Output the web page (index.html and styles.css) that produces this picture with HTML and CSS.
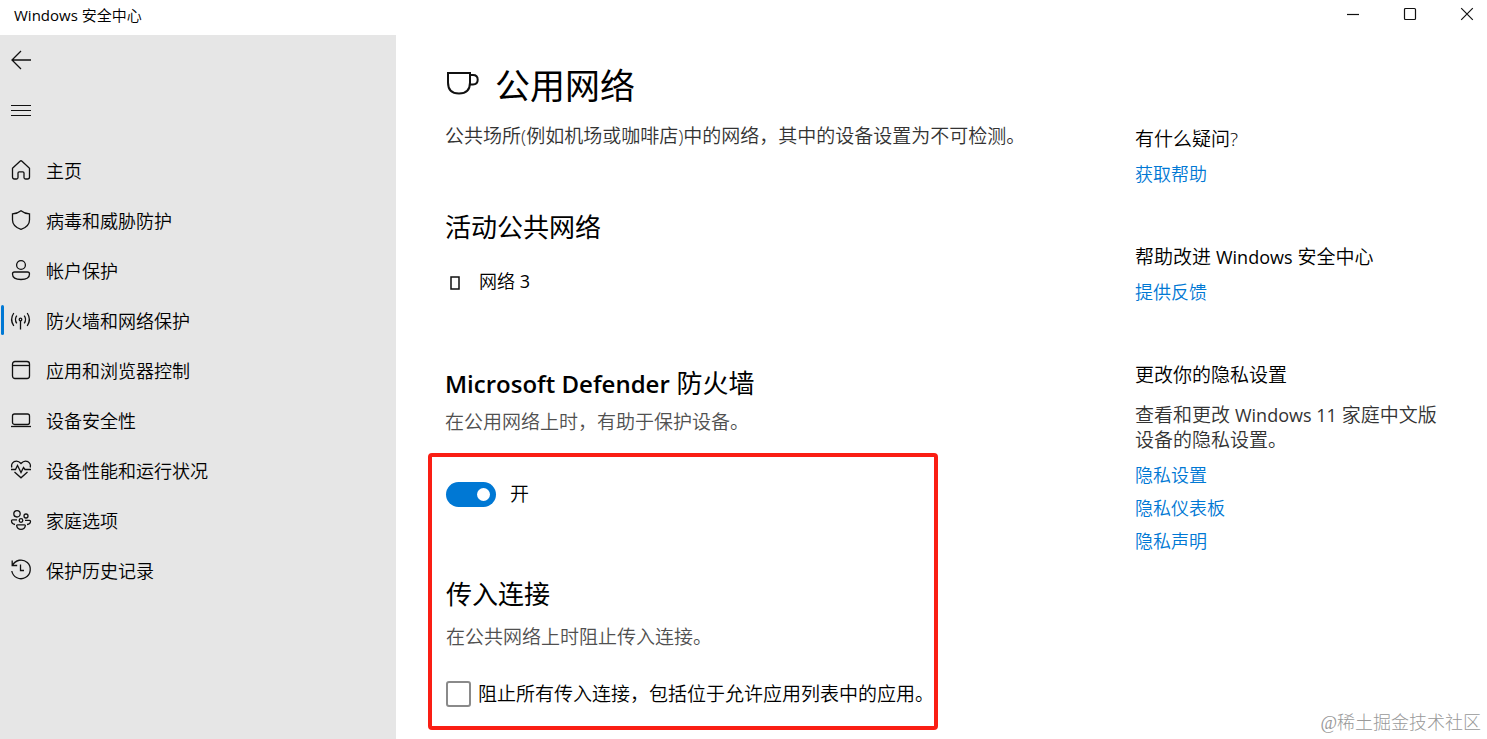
FILE: index.html
```html
<!DOCTYPE html>
<html lang="zh-CN">
<head>
<meta charset="utf-8">
<title>Windows 安全中心</title>
<link rel="stylesheet" href="styles.css">
</head>
<body>
<div class="window">
  <header class="titlebar">
    <span class="titlebar-name"><span class="latin">Windows</span> 安全中心</span>
    <div class="controls">
      <button class="control" aria-label="最小化"><svg class="control-icon" viewBox="0 0 14 14"><path d="M1 7.500h12"/></svg></button>
      <button class="control" aria-label="最大化"><svg class="control-icon" viewBox="0 0 14 14"><rect x="1.500" y="1.500" width="11" height="11" rx="1"/></svg></button>
      <button class="control" aria-label="关闭"><svg class="control-icon" viewBox="0 0 14 14"><path d="M1.200 1.200l11.600 11.600M12.800 1.200L1.200 12.800"/></svg></button>
    </div>
  </header>

  <nav class="sidebar">
    <button class="nav-row" aria-label="返回"><svg class="icon" viewBox="0 0 20 20"><path d="M20 11H1M10 2L1 11l9 9"/></svg></button>
    <button class="nav-row" aria-label="菜单"><svg class="icon" viewBox="0 0 20 20"><path stroke-width="1" d="M0 6.500h20M0 11.500h20M0 16.500h20"/></svg></button>
    <div class="nav-list">
      <a class="nav-row" href="#"><svg class="icon" viewBox="0 0 20 20"><path d="M1.500 8.300L9 1.200q1-.9 2 0l7.500 7.100v8.700q0 2-2 2h-2q-1.500 0-1.500-1.500v-4.500q0-1.200-1.200-1.200H8.200Q7 11.800 7 13v4.500Q7 19 5.500 19h-2q-2 0-2-2z"/></svg>主页</a>
      <a class="nav-row" href="#"><svg class="icon" viewBox="0 0 20 20"><path d="M10 .8Q13.500 3.700 18.500 3.900V10q0 6.500-8.500 9.300Q1.500 16.500 1.500 10V3.900Q6.500 3.700 10 .8z"/></svg>病毒和威胁防护</a>
      <a class="nav-row" href="#"><svg class="icon" viewBox="0 0 20 20"><circle cx="10" cy="5" r="4.400"/><path d="M3.500 12h13q2 0 2 2 0 5.500-8.500 5.500T1.500 14q0-2 2-2z"/></svg>帐户保护</a>
      <a class="nav-row active" href="#" aria-current="page"><svg class="icon" viewBox="0 0 20 20"><circle cx="9.500" cy="9.500" r="1.300"/><path d="M9.500 11v8.500M5.800 13.300q-2.800-3.800 0-7.600M13.200 13.300q2.800-3.800 0-7.600M2.800 16q-4.400-6.500 0-13M16.200 16q4.400-6.500 0-13"/></svg>防火墙和网络保护</a>
      <a class="nav-row" href="#"><svg class="icon" viewBox="0 0 20 20"><rect x="1.500" y="1.500" width="17" height="17" rx="2.500"/><path d="M1.500 5.500h17"/></svg>应用和浏览器控制</a>
      <a class="nav-row" href="#"><svg class="icon" viewBox="0 0 20 20"><rect x="1.500" y="4" width="17" height="10.500" rx="2"/><path d="M0 16.500h20"/></svg>设备安全性</a>
      <a class="nav-row" href="#"><svg class="icon" viewBox="0 0 20 20"><path d="M.8 7.500Q-.2 3.500 3 1.700q3.800-1.800 7 1.800 3.200-3.600 7-1.800 3.200 1.800 2.200 5.800M0 9.500h4.500l2-4 3.500 7 2.500-5 1.500 2h6M3.500 12L10 17.800 16.500 12"/></svg>设备性能和运行状况</a>
      <a class="nav-row" href="#"><svg class="icon" viewBox="0 0 20 20"><circle cx="6" cy="3.800" r="3.200"/><circle cx="15" cy="6" r="2"/><circle cx="10" cy="10.500" r="1.800"/><path d="M6 9.800H1.500q-1 0-1 1 0 3.200 3.500 3.700M14 10.300h4.500q1 0 1 1 0 3-3.500 3.200M6.500 14.800h7q1 0 .8 1-.7 3.500-4.300 3.500t-4.300-3.500q-.2-1 .8-1z"/></svg>家庭选项</a>
      <a class="nav-row" href="#"><svg class="icon" viewBox="0 0 20 20"><path d="M1.200 .5v5h5M1.500 5.500A9.300 9.300 0 1 1 .8 11M9.500 4.500v6H13"/></svg>保护历史记录</a>
    </div>
  </nav>

  <main class="content">
    <h1 class="page-title"><svg class="cup" viewBox="0 0 34 24"><path d="M3 2h22v9.500q0 11-11 11t-11-11zM25 4h3q4.700 0 4.700 4.700T28 13.400h-3"/></svg>公用网络</h1>
    <p class="lead">公共场所(例如机场或咖啡店)中的网络，其中的设备设置为不可检测。</p>

    <h2 class="heading networks-heading">活动公共网络</h2>
    <div class="network"><svg class="network-icon" viewBox="0 0 10 14"><rect x="1" y="1" width="8" height="12"/></svg><span>网络 <span class="latin">3</span></span></div>

    <h2 class="heading firewall-heading"><span class="product">Microsoft Defender</span> 防火墙</h2>
    <p class="note firewall-note">在公用网络上时，有助于保护设备。</p>

    <section class="highlight">
      <label class="switch-row"><input class="switch" type="checkbox" role="switch" checked>开</label>
      <h2 class="heading incoming-heading">传入连接</h2>
      <p class="note incoming-note">在公共网络上时阻止传入连接。</p>
      <label class="check-row"><input class="check" type="checkbox">阻止所有传入连接，包括位于允许应用列表中的应用。</label>
    </section>
  </main>

  <aside class="help">
    <section class="help-group">
      <h3 class="help-title">有什么疑问?</h3>
      <a class="link" href="#">获取帮助</a>
    </section>
    <section class="help-group">
      <h3 class="help-title">帮助改进 <span class="latin">Windows</span> 安全中心</h3>
      <a class="link" href="#">提供反馈</a>
    </section>
    <section class="help-group">
      <h3 class="help-title">更改你的隐私设置</h3>
      <p class="help-text">查看和更改 <span class="latin">Windows 11</span> 家庭中文版设备的隐私设置。</p>
      <div class="links">
        <a class="link" href="#">隐私设置</a>
        <a class="link" href="#">隐私仪表板</a>
        <a class="link" href="#">隐私声明</a>
      </div>
    </section>
  </aside>
  <span class="watermark">@稀土掘金技术社区</span>
</div>
</body>
</html>
```
FILE: styles.css
```css
* { box-sizing: border-box; }

body {
  margin: 0;
  background: #fff;
  color: #000;
  font-family: "Open Sans", "Noto Sans CJK SC", sans-serif;
  font-size: 18px;
  font-weight: 350;
  line-height: 26px;
}

h1, h2, h3, p { margin: 0; font-weight: inherit; }
a { text-decoration: none; color: inherit; }
button { font: inherit; color: inherit; background: none; border: 0; }
svg { fill: none; stroke: #111; flex: none; }
.latin { font-size: 18px; font-weight: 400; line-height: 1; }

.window {
  position: relative;
  min-height: 100vh;
  display: grid;
  grid-template-columns: 396px 1fr 352px;
  grid-template-rows: 35px 1fr;
}

.titlebar {
  grid-column: 1 / -1;
  display: flex;
  justify-content: space-between;
  padding-left: 14px;
  font-size: 15px;
  line-height: 30px;
}
.titlebar .latin { font-size: 15px; }
.controls { display: flex; height: 28px; margin-right: -8px; }
.control { width: 57px; padding: 0; display: grid; place-items: center; }
.control-icon { width: 14px; height: 14px; stroke-width: 1.2; }

.sidebar { background: #e6e6e6; }
.nav-list { margin-top: 11px; }
.nav-row {
  position: relative;
  display: flex;
  align-items: center;
  gap: 15px;
  width: 100%;
  height: 50px;
  padding: 0 11px;
}
.icon { width: 20px; height: 20px; margin-bottom: 2px; stroke-width: 1.3; overflow: visible; }
.active::before {
  content: "";
  position: absolute;
  left: 1px;
  top: 9px;
  width: 3px;
  height: 30px;
  border-radius: 2px;
  background: #0078d4;
}

.content { padding: 27px 0 9px 49px; }
.page-title { display: flex; gap: 16px; align-items: center; font-size: 35px; line-height: 48px; font-weight: 400; }
.cup { width: 34px; height: 24px; margin-bottom: 6px; stroke-width: 2; }
.lead { margin-top: 13px; font-size: 19px; color: #333; }
.heading { font-size: 26px; line-height: 34px; font-weight: 400; }
.networks-heading { margin-top: 61px; }
.network { display: flex; align-items: center; gap: 19px; margin-top: 24px; padding-left: 5px; }
.network-icon { width: 10px; height: 14px; margin-top: 4px; stroke-width: 1.5; }
.firewall-heading { margin-top: 72px; }
.product { font-size: 24px; font-weight: 600; line-height: 1; }
.note { font-size: 19px; color: #505050; }
.firewall-note { margin-top: 9px; }

.highlight {
  width: fit-content;
  margin: 18px 0 0 -17px;
  padding: 24px 0 19px 14px;
  border: 4px solid #fa1e14;
  border-radius: 4px;
}
.switch-row, .check-row { display: flex; align-items: center; font-size: 19px; }
.switch-row { gap: 14px; }
.check-row { gap: 7px; margin-top: 31px; }
.switch {
  appearance: none;
  display: flex;
  align-items: center;
  justify-content: flex-end;
  width: 50px;
  height: 25px;
  margin: 0;
  padding-right: 6px;
  border-radius: 13px;
  background: #0078d4;
}
.switch::before { content: ""; width: 13px; height: 13px; border-radius: 50%; background: #fff; }
.switch:not(:checked) { justify-content: flex-start; padding-left: 6px; background: #888; }
.check { appearance: none; width: 25px; height: 26px; margin: 0; border: 2px solid #8a8a8a; border-radius: 3px; background: #fff; }
.check:checked { background: #0078d4; }
.incoming-heading { margin-top: 70px; }
.incoming-note { margin-top: 13px; }

.help { padding: 91px 46px 0 0; }
.help-group + .help-group { margin-top: 57px; }
.help-title { margin-bottom: 9px; font-size: 19px; }
.link { display: block; width: fit-content; color: #0078d4; }
.help-text { margin: 15px 0 9px; font-size: 19px; line-height: 25px; color: #333; }
.links { display: grid; gap: 7px; }

.watermark {
  position: absolute;
  right: 6px;
  bottom: 3px;
  color: #999;
  font-family: "Liberation Serif", "Noto Sans CJK SC", serif;
  font-weight: 300;
}
```
